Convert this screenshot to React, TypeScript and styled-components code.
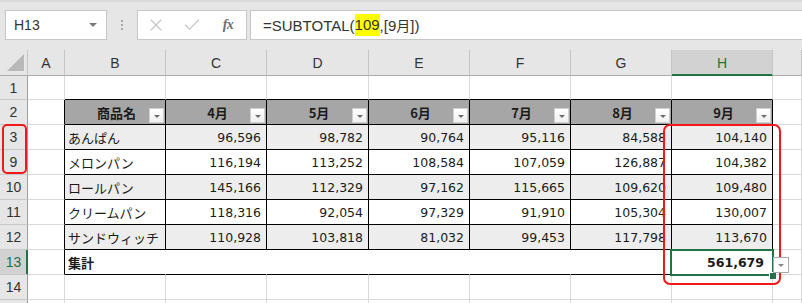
import React from 'react';
import styled, { createGlobalStyle } from 'styled-components';
import { X, Check } from 'lucide-react';

const GlobalStyle = createGlobalStyle`
  html, body {
    margin: 0;
    padding: 0;
    background: #ffffff;
  }
  body {
    font-family: "Liberation Sans", Arial, sans-serif;
  }
  * {
    box-sizing: border-box;
  }
`;

const GREEN = '#217346';
const GRID = '#d9d9d9';
const INK = '#1b1b1b';

type Row = { num: number; name: string; values: number[]; banded: boolean };

const months = ['4月', '5月', '6月', '7月', '8月', '9月'];

const rows: Row[] = [
  { num: 3, name: 'あんぱん', values: [96596, 98782, 90764, 95116, 84588, 104140], banded: true },
  { num: 9, name: 'メロンパン', values: [116194, 113252, 108584, 107059, 126887, 104382], banded: false },
  { num: 10, name: 'ロールパン', values: [145166, 112329, 97162, 115665, 109620, 109480], banded: true },
  { num: 11, name: 'クリームパン', values: [118316, 92054, 97329, 91910, 105304, 130007], banded: false },
  { num: 12, name: 'サンドウィッチ', values: [110928, 103818, 81032, 99453, 117798, 113670], banded: true },
];

const total = rows.reduce((sum, r) => sum + r.values[5], 0);
const fmt = (n: number) => n.toLocaleString('en-US');

const Page = styled.div`
  position: relative;
  width: 802px;
  height: 303px;
  overflow: hidden;
  background: #ffffff;
`;

const TopBar = styled.div`
  height: 50px;
  display: flex;
  align-items: flex-start;
  padding: 10px 0 0 5px;
  background: #e6e6e6;
  border-top: 2px solid #dadada;
`;

const NameBox = styled.div`
  width: 102px;
  height: 30px;
  margin-top: -2px;
  display: flex;
  align-items: center;
  justify-content: space-between;
  padding: 0 9px 0 8px;
  background: #ffffff;
  border: 1px solid #c6c6c6;
  font-size: 14px;
  color: #333333;
`;

const Caret = styled.span<{ $size?: number; $color?: string }>`
  width: 0;
  height: 0;
  border-left: ${(p) => p.$size || 4}px solid transparent;
  border-right: ${(p) => p.$size || 4}px solid transparent;
  border-top: ${(p) => p.$size || 4}px solid ${(p) => p.$color || '#7a7a7a'};
`;

const Grip = styled.div`
  width: 30px;
  height: 30px;
  margin-top: -2px;
  display: flex;
  flex-direction: column;
  align-items: center;
  justify-content: center;
  gap: 2px;

  span {
    width: 2px;
    height: 2px;
    background: #a8a8a8;
  }
`;

const FxBox = styled.div`
  width: 110px;
  height: 30px;
  margin-top: -2px;
  display: flex;
  align-items: center;
  gap: 16px;
  padding-left: 8px;
  background: #ffffff;
  border: 1px solid #c6c6c6;
  color: #c4c4c4;
`;

const FxLabel = styled.span`
  width: 20px;
  text-align: center;
  font-family: "Liberation Serif", "Times New Roman", serif;
  font-style: italic;
  font-weight: bold;
  font-size: 14px;
  color: #6e6e6e;
  letter-spacing: -0.5px;
`;

const FormulaInput = styled.div`
  flex: 1;
  height: 30px;
  margin: -2px 0 0 3px;
  display: flex;
  align-items: center;
  padding-left: 12px;
  background: #ffffff;
  border: 1px solid #c6c6c6;
  border-right: none;
  font-size: 15px;
  color: #333333;
  white-space: pre;
`;

const Highlight = styled.span`
  display: inline-block;
  height: 22px;
  line-height: 22px;
  background: #ffff00;
`;

const JpChar = styled.span`
  font-family: "Noto Sans CJK JP", sans-serif;
  font-size: 14px;
`;

const Sheet = styled.div`
  display: grid;
  grid-template-columns: 28px 37px 101px 101px 102px 101px 101px 101px 101px 1fr;
  grid-template-rows: 26px 24px repeat(9, 25px);
`;

const Corner = styled.div`
  display: flex;
  align-items: flex-end;
  justify-content: flex-end;
  padding: 0 3px 4px 0;
  background: #e6e6e6;
  border-right: 1px solid #c4c4c4;
  border-bottom: 1px solid #ababab;

  span {
    width: 0;
    height: 0;
    border-left: 17px solid transparent;
    border-bottom: 17px solid #b8b8b8;
  }
`;

const ColHead = styled.div<{ $active?: boolean }>`
  display: flex;
  align-items: center;
  justify-content: center;
  background: ${(p) => (p.$active ? '#d2d2d2' : '#e6e6e6')};
  border-right: 1px solid #c4c4c4;
  border-bottom: 1px solid ${(p) => (p.$active ? GREEN : '#ababab')};
  box-shadow: ${(p) => (p.$active ? `inset 0 -1px 0 ${GREEN}` : 'none')};
  font-size: 14px;
  color: ${(p) => (p.$active ? GREEN : '#333333')};
`;

const RowHead = styled.div<{ $active?: boolean }>`
  display: flex;
  align-items: center;
  justify-content: center;
  background: ${(p) => (p.$active ? '#d2d2d2' : '#e6e6e6')};
  border-right: 1px solid ${(p) => (p.$active ? GREEN : '#9e9e9e')};
  border-bottom: 1px solid #c8c8c8;
  box-shadow: ${(p) => (p.$active ? `inset -1px 0 0 ${GREEN}` : 'none')};
  font-size: 14px;
  color: ${(p) => (p.$active ? GREEN : '#333333')};
`;

type CellProps = {
  $bg?: string;
  $right?: string;
  $bottom?: string;
  $align?: 'left' | 'right' | 'center';
  $bold?: boolean;
  $jp?: boolean;
};

const Cell = styled.div<CellProps>`
  position: relative;
  display: flex;
  align-items: center;
  justify-content: ${(p) =>
    p.$align === 'right' ? 'flex-end' : p.$align === 'center' ? 'center' : 'flex-start'};
  padding: ${(p) => (p.$align === 'right' ? (p.$bold ? '0 8px 0 0' : '0 5px 0 0') : '0 0 0 3px')};
  background: ${(p) => p.$bg || '#ffffff'};
  border-right: 1px solid ${(p) => p.$right || GRID};
  border-bottom: 1px solid ${(p) => p.$bottom || GRID};
  font-family: ${(p) =>
    p.$jp ? '"Noto Sans CJK JP", sans-serif' : '"DejaVu Sans", "Noto Sans CJK JP", sans-serif'};
  font-size: ${(p) => (p.$jp ? '13px' : '12.5px')};
  font-weight: ${(p) => (p.$bold ? 'bold' : 'normal')};
  color: ${INK};
  white-space: nowrap;
`;

const SelectedCell = styled(Cell)`
  &::after {
    content: '';
    position: absolute;
    left: -2px;
    top: -1px;
    right: -2px;
    bottom: -2px;
    border: 2px solid ${GREEN};
    z-index: 3;
  }

  &::before {
    content: '';
    position: absolute;
    right: -4px;
    bottom: -5px;
    width: 6px;
    height: 6px;
    background: ${GREEN};
    border-left: 1px solid #ffffff;
    border-top: 1px solid #ffffff;
    z-index: 4;
  }
`;

const FilterBtn = styled.span`
  position: absolute;
  right: 1px;
  bottom: 1px;
  width: 15px;
  height: 15px;
  display: flex;
  align-items: center;
  justify-content: center;
  padding-top: 2px;
  background: linear-gradient(#ffffff, #f1f1f1);
  border: 1px solid #d0d0d0;
`;

const TotalDrop = styled.span`
  position: absolute;
  left: calc(100% + 1px);
  top: 7px;
  width: 16px;
  height: 16px;
  display: flex;
  align-items: center;
  justify-content: center;
  padding-top: 1px;
  background: #ffffff;
  border: 1px solid #ababab;
  z-index: 7;
`;

const RedFrame = styled.div<{ $radius: number }>`
  position: absolute;
  border: 2px solid #f01818;
  border-radius: ${(p) => p.$radius}px;
  z-index: 6;
  pointer-events: none;
`;

const BLACK = '#000000';
const letters = ['A', 'B', 'C', 'D', 'E', 'F', 'G', 'H', ''];

function BlankRow({ num, tableBelow }: { num?: number; tableBelow?: boolean }) {
  return (
    <>
      <RowHead>{num}</RowHead>
      {letters.map((l, i) => (
        <Cell key={l || 'I'} $bottom={tableBelow && i >= 1 && i <= 7 ? BLACK : undefined} />
      ))}
    </>
  );
}

export default function App() {
  return (
    <Page>
      <GlobalStyle />
      <TopBar>
        <NameBox>
          H13
          <Caret $size={4} />
        </NameBox>
        <Grip>
          <span />
          <span />
          <span />
        </Grip>
        <FxBox>
          <X size={20} strokeWidth={1.4} />
          <Check size={20} strokeWidth={1.4} />
          <FxLabel>fx</FxLabel>
        </FxBox>
        <FormulaInput>
          =SUBTOTAL(<Highlight>109</Highlight>,[9<JpChar>月</JpChar>])
        </FormulaInput>
      </TopBar>

      <Sheet>
        <Corner>
          <span />
        </Corner>
        {letters.map((l) => (
          <ColHead key={l || 'I'} $active={l === 'H'}>
            {l}
          </ColHead>
        ))}

        <BlankRow num={1} tableBelow />

        <RowHead>2</RowHead>
        <Cell $right={BLACK} />
        {['商品名', ...months].map((h) => (
          <Cell key={h} $bg="#a6a6a6" $right={BLACK} $bottom={BLACK} $align="center" $bold $jp>
            {h}
            <FilterBtn>
              <Caret $size={3.5} $color="#6b6b6b" />
            </FilterBtn>
          </Cell>
        ))}
        <Cell />

        {rows.map((r) => {
          const bg = r.banded ? '#ededed' : '#ffffff';
          return (
            <React.Fragment key={r.num}>
              <RowHead>{r.num}</RowHead>
              <Cell $right={BLACK} />
              <Cell $bg={bg} $right={BLACK} $bottom={BLACK} $jp>
                {r.name}
              </Cell>
              {r.values.map((v, i) => (
                <Cell key={i} $bg={bg} $right={BLACK} $bottom={BLACK} $align="right">
                  {fmt(v)}
                </Cell>
              ))}
              <Cell />
            </React.Fragment>
          );
        })}

        <RowHead $active>13</RowHead>
        <Cell $right={BLACK} />
        <Cell $right="#ffffff" $bottom={BLACK} $bold $jp>
          集計
        </Cell>
        {[0, 1, 2, 3, 4].map((i) => (
          <Cell key={i} $right={i === 4 ? BLACK : '#ffffff'} $bottom={BLACK} />
        ))}
        <SelectedCell $right={BLACK} $bottom={BLACK} $align="right" $bold>
          {fmt(total)}
          <TotalDrop>
            <Caret $size={3.5} $color="#8a8a8a" />
          </TotalDrop>
        </SelectedCell>
        <Cell />

        <BlankRow num={14} />
        <BlankRow />
      </Sheet>

      <RedFrame $radius={5} style={{ left: 2, top: 124, width: 25, height: 50 }} />
      <RedFrame $radius={7} style={{ left: 663, top: 124, width: 118, height: 161 }} />
    </Page>
  );
}
